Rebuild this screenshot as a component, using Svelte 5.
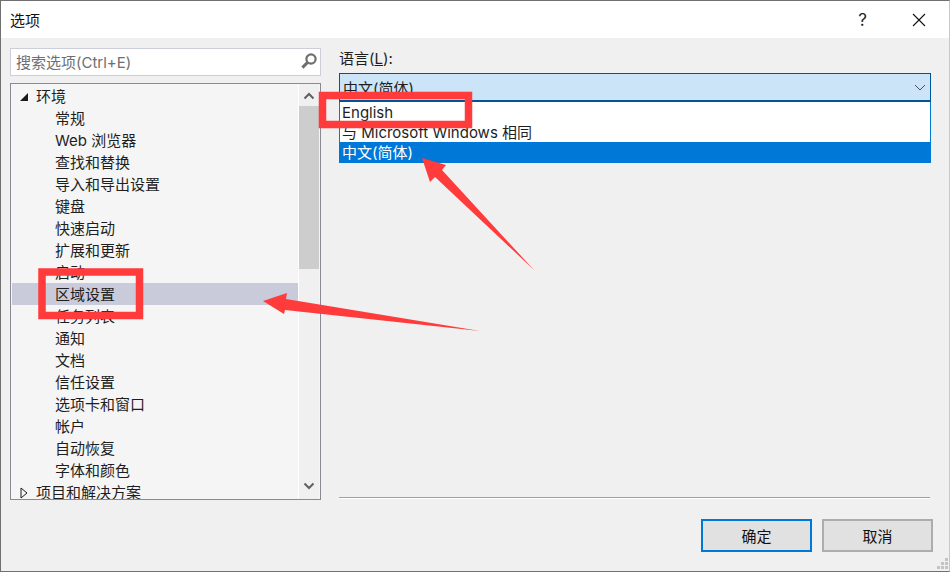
<script>
  const items = ['常规', 'Web 浏览器', '查找和替换', '导入和导出设置', '键盘', '快速启动', '扩展和更新', '启动', '区域设置', '任务列表', '通知', '文档', '信任设置', '选项卡和窗口', '帐户', '自动恢复', '字体和颜色'];
  const languages = ['English', '与 Microsoft Windows 相同', '中文(简体)'];
  let selected = '区域设置';
  let language = '中文(简体)';
</script>

<div class="dialog">
  <header class="titlebar">
    <span class="title">选项</span>
    <div class="title-actions">
      <span class="help">?</span>
      <svg class="close" width="14" height="14" viewBox="0 0 14 14">
        <path d="M1 1 L13 13 M13 1 L1 13" stroke="#111" stroke-width="1.1" fill="none" />
      </svg>
    </div>
  </header>

  <div class="content">
    <aside class="left">
      <div class="search">
        <span class="placeholder">搜索选项(Ctrl+E)</span>
        <svg width="18" height="18" viewBox="0 0 18 18">
          <circle cx="11" cy="7" r="4.6" fill="none" stroke="#6f6f6f" stroke-width="2.2" />
          <path d="M7.6 10.4 L2.4 15.6" stroke="#6f6f6f" stroke-width="3" fill="none" />
        </svg>
      </div>

      <div class="tree">
        <div class="rows">
          <div class="row top">
            <svg class="caret" width="10" height="10" viewBox="0 0 10 10"><path d="M9 1 V9 H1 Z" fill="#1a1a1a" /></svg>
            环境
          </div>
          {#each items as item}
            <div class="row child" class:selected={item === selected}>{item}</div>
          {/each}
          <div class="row top">
            <svg class="caret" width="10" height="12" viewBox="0 0 10 12"><path d="M2 1 L8 6 L2 11 Z" fill="none" stroke="#1a1a1a" /></svg>
            项目和解决方案
          </div>
        </div>
        <div class="scrollbar">
          <svg class="arrow" width="12" height="8" viewBox="0 0 12 8"><path d="M1.5 6.5 L6 2 L10.5 6.5" fill="none" stroke="#606060" stroke-width="2" /></svg>
          <div class="thumb"></div>
          <svg class="arrow down" width="12" height="8" viewBox="0 0 12 8"><path d="M1.5 1.5 L6 6 L10.5 1.5" fill="none" stroke="#606060" stroke-width="2" /></svg>
        </div>
      </div>
    </aside>

    <main class="right">
      <div class="label">语言(<u>L</u>):</div>
      <div class="combo-wrap">
        <div class="combo">
          <span>{language}</span>
          <svg width="12" height="7" viewBox="0 0 12 7"><path d="M1 1 L6 6 L11 1" fill="none" stroke="#44505c" stroke-width="1" /></svg>
        </div>
        <ul class="dropdown">
          {#each languages as lang}
            <li class:active={lang === language}>{lang}</li>
          {/each}
        </ul>
      </div>
      <div class="spacer"></div>
      <div class="separator"></div>
      <div class="buttons">
        <button class="primary">确定</button>
        <button>取消</button>
      </div>
    </main>
  </div>

  <svg class="grip" width="12" height="12" viewBox="0 0 12 12">
    <g fill="#c4c4c4">
      <rect x="8" y="0" width="3" height="3" />
      <rect x="4" y="4" width="3" height="3" />
      <rect x="8" y="4" width="3" height="3" />
      <rect x="0" y="8" width="3" height="3" />
      <rect x="4" y="8" width="3" height="3" />
      <rect x="8" y="8" width="3" height="3" />
    </g>
  </svg>

  <!-- annotations drawn over the screenshot -->
  <svg class="marks" width="950" height="572" viewBox="0 0 950 572">
    <g fill="none" stroke="#ff3b3b" stroke-width="7.5">
      <rect x="322.5" y="95.5" width="146" height="29" />
      <rect x="42" y="272" width="97.5" height="43.5" />
    </g>
    <g fill="#ff3b3b">
      <path d="M422 158 L446 165 L442 170 L534 270 L435 177 L430 182 Z" />
      <path d="M263 301 L287 293 L286 299 L480 331 L285 310 L284 314 Z" />
    </g>
  </svg>
</div>

<style>
  :global(body) {
    margin: 0;
    background: #f0f0f0;
  }

  .dialog {
    position: relative;
    box-sizing: border-box;
    width: 950px;
    height: 572px;
    display: flex;
    flex-direction: column;
    overflow: hidden;
    background: #f0f0f0;
    border: 1px solid #707070;
    border-right-color: #c8c8c8;
    font-family: Inter, "Noto Sans CJK SC", sans-serif;
    font-size: 15px;
    color: #1e1e1e;
  }

  .titlebar {
    height: 37px;
    flex: none;
    display: flex;
    align-items: center;
    justify-content: space-between;
    padding: 0 23px 0 9px;
    background: #fff;
  }

  .title {
    color: #111;
  }

  .title-actions {
    display: flex;
    align-items: center;
    gap: 45px;
  }

  .help {
    font-size: 17px;
    color: #222;
  }

  .close {
    display: block;
  }

  .content {
    flex: 1;
    min-height: 0;
    display: flex;
    padding: 10px 16px 19px 9px;
    gap: 18px;
  }

  .left {
    width: 311px;
    flex: none;
    display: flex;
    flex-direction: column;
    gap: 7px;
  }

  .search {
    box-sizing: border-box;
    height: 28px;
    flex: none;
    display: flex;
    align-items: center;
    justify-content: space-between;
    padding: 0 2px 2px 5px;
    background: #fff;
    border: 1px solid #ccceDB;
  }

  .placeholder {
    color: #6f6f6f;
  }

  .tree {
    box-sizing: border-box;
    height: 417px;
    flex: none;
    display: flex;
    overflow: hidden;
    padding-left: 1px;
    background: #f5f5f5;
    border: 1px solid #8a8a94;
  }

  .rows {
    flex: 1;
    padding-top: 1px;
    overflow: hidden;
    border-right: 1px solid #fff;
  }

  .row {
    box-sizing: border-box;
    height: 22px;
    line-height: 24px;
    white-space: nowrap;
  }

  .row.top {
    display: flex;
    align-items: center;
    gap: 7px;
    padding-left: 7px;
    padding-top: 2px;
    line-height: 20px;
  }

  .caret {
    flex: none;
  }

  .row.child {
    padding-left: 43px;
  }

  .row.selected {
    background: #c9cbda;
  }

  .scrollbar {
    width: 20px;
    flex: none;
    display: flex;
    flex-direction: column;
    align-items: center;
    background: #f0f0f0;
    margin-right: 1px;
  }

  .arrow {
    flex: none;
    margin: 8px 0 6px;
  }

  .arrow.down {
    margin: auto 0 9px;
  }

  .thumb {
    width: 100%;
    height: 163px;
    background: #cdcdcd;
  }

  .right {
    flex: 1;
    min-width: 0;
    display: flex;
    flex-direction: column;
  }

  .label {
    height: 25px;
    line-height: 22px;
  }

  .combo-wrap {
    position: relative;
    margin-right: 2px;
  }

  .combo {
    box-sizing: border-box;
    height: 29px;
    display: flex;
    align-items: center;
    justify-content: space-between;
    padding: 0 4px 0 3px;
    background: #cce4f7;
    border: 1px solid #005499;
    border-bottom-width: 2px;
  }

  .dropdown {
    position: absolute;
    top: 29px;
    left: 0;
    right: 0;
    margin: 0;
    padding: 0;
    list-style: none;
    background: #fff;
    border: solid #0078d7;
    border-width: 0 1px 0 1px;
    line-height: 22px;
  }

  .dropdown li {
    height: 20px;
    padding-left: 2px;
    white-space: nowrap;
  }

  .dropdown li.active {
    height: 21px;
    background: #0078d7;
    color: #fff;
  }

  .spacer {
    flex: 1;
  }

  .separator {
    height: 1px;
    margin-right: 3px;
    background: #a0a0a0;
    box-shadow: 0 1px 0 #fff;
  }

  .buttons {
    display: flex;
    justify-content: flex-end;
    gap: 10px;
    margin-top: 21px;
  }

  button {
    box-sizing: border-box;
    width: 111px;
    height: 33px;
    padding: 0;
    font: inherit;
    color: #111;
    background: #e1e1e1;
    border: 1px solid #adadad;
    outline: 1px solid #adadad;
    outline-offset: -2px;
  }

  button.primary {
    border: 2px solid #0078d7;
    outline: none;
  }

  .grip {
    position: absolute;
    right: 0;
    bottom: 1px;
  }

  .marks {
    position: absolute;
    left: -1px;
    top: -1px;
    pointer-events: none;
  }
</style>
